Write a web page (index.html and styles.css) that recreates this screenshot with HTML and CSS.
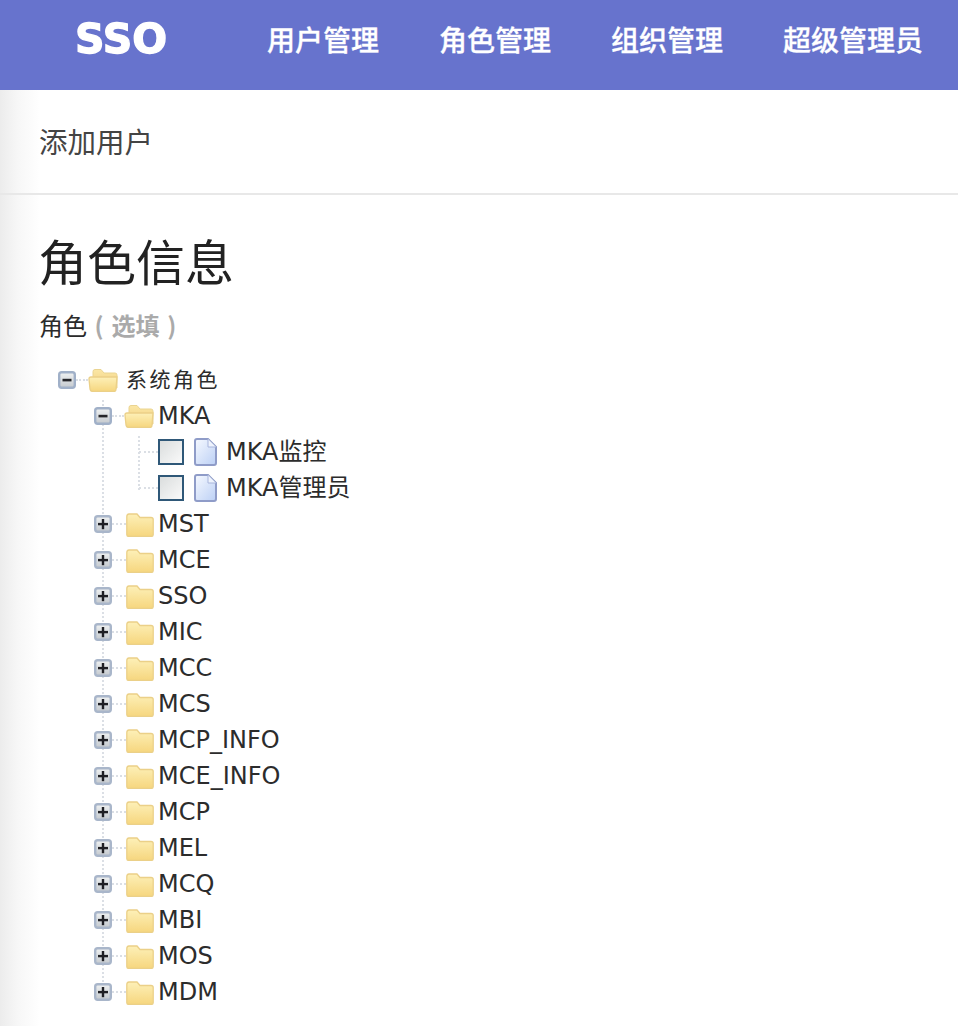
FILE: index.html
```html
<!DOCTYPE html>
<html lang="zh-CN">
<head>
<meta charset="utf-8">
<title>SSO</title>
<link rel="stylesheet" href="styles.css">
</head>
<body>
<svg class="defs" width="0" height="0" aria-hidden="true">
  <defs>
    <linearGradient id="gFolder" x1="0" y1="0" x2="0" y2="1"><stop offset="0" stop-color="#fdf0b8"/><stop offset="1" stop-color="#f6d67e"/></linearGradient>
    <linearGradient id="gBack" x1="0" y1="0" x2="0" y2="1"><stop offset="0" stop-color="#fbe7a6"/><stop offset="1" stop-color="#f2cf7c"/></linearGradient>
    <linearGradient id="gBox" x1="0" y1="0" x2="0" y2="1"><stop offset="0" stop-color="#f0f2f2"/><stop offset="1" stop-color="#c4c9ce"/></linearGradient>
    <linearGradient id="gCheck" x1="0" y1="0" x2="1" y2="1"><stop offset="0" stop-color="#d9dcdc"/><stop offset="1" stop-color="#fbfbfb"/></linearGradient>
    <linearGradient id="gPage" x1="0" y1="0" x2="1" y2="1"><stop offset="0" stop-color="#f6f9ff"/><stop offset="1" stop-color="#bcd0f5"/></linearGradient>
    <symbol id="i-minus" viewBox="0 0 18 18">
      <rect x="1.200" y="1.200" width="15.600" height="15.600" rx="2.500" fill="url(#gBox)" stroke="#a0b0c8" stroke-width="2.400"/>
      <rect x="4.500" y="7.800" width="9" height="2.600" fill="#26262a"/>
    </symbol>
    <symbol id="i-plus" viewBox="0 0 18 18">
      <rect x="1.200" y="1.200" width="15.600" height="15.600" rx="2.500" fill="url(#gBox)" stroke="#a9b6ca" stroke-width="2.400"/>
      <rect x="4" y="7.900" width="10" height="2.400" fill="#1f1f24"/>
      <rect x="7.800" y="4" width="2.400" height="10.200" fill="#1f1f24"/>
    </symbol>
    <symbol id="i-open" viewBox="0 0 30 24">
      <path d="M5 20V3.500Q5 1.500 7 1.500H13L16 5H27Q29 5 29 7V20Z" fill="url(#gBack)" stroke="#ead491"/>
      <path d="M1 11Q1 9 3 9H29L28 21Q28 23.500 26 23.500H5Q2.500 23.500 2 21Z" fill="url(#gFolder)" stroke="#ebd088" stroke-width="1.300"/>
    </symbol>
    <symbol id="i-closed" viewBox="0 0 28 24">
      <path d="M.8 4Q.8 1 3 1H11L14 4.500H25Q27.200 4.500 27.200 6.500V21.500Q27.200 23.500 25 23.500H3Q.8 23.500 .8 21.500Z" fill="url(#gFolder)" stroke="#ebd088" stroke-width="1.300"/>
    </symbol>
    <symbol id="i-check" viewBox="0 0 26 26">
      <rect x="1" y="1" width="24" height="24" fill="url(#gCheck)" stroke="#2f5878" stroke-width="2"/>
    </symbol>
    <symbol id="i-page" viewBox="0 0 24 28">
      <path d="M2 3Q2 1 4 1H15L23 9V25Q23 27 21 27H4Q2 27 2 25Z" fill="url(#gPage)" stroke="#8f9cc8" stroke-width="2"/>
      <path d="M15 1V9H23" fill="#eef3fd" stroke="#a9b6dc"/>
    </symbol>
  </defs>
</svg>

<header class="topbar">
  <div class="logo">SSO</div>
  <nav class="nav">
    <a class="nav-item">用户管理</a>
    <a class="nav-item">角色管理</a>
    <a class="nav-item">组织管理</a>
    <a class="nav-item">超级管理员</a>
  </nav>
</header>

<main class="main">
  <div class="crumb">添加用户</div>
  <section class="content">
    <h1 class="title">角色信息</h1>
    <div class="field-label">角色 <span class="optional">( 选填 )</span></div>
    <ul class="tree">
      <li>
        <div class="row">
          <svg class="toggle"><use href="#i-minus"/></svg><i class="dash"></i>
          <svg class="folder-open"><use href="#i-open"/></svg>
          <span class="label-root">系统角色</span>
        </div>
        <ul class="branch">
          <li>
            <div class="row">
              <svg class="toggle"><use href="#i-minus"/></svg><i class="dash"></i>
              <svg class="folder-open"><use href="#i-open"/></svg>
              <span class="label">MKA</span>
            </div>
            <ul class="leaves">
              <li class="row"><i class="dash-leaf"></i><svg class="check"><use href="#i-check"/></svg><svg class="page"><use href="#i-page"/></svg><span class="label">MKA监控</span></li>
              <li class="row"><i class="dash-leaf"></i><svg class="check"><use href="#i-check"/></svg><svg class="page"><use href="#i-page"/></svg><span class="label">MKA管理员</span></li>
            </ul>
          </li>
          <li class="row"><svg class="toggle"><use href="#i-plus"/></svg><i class="dash-closed"></i><svg class="folder"><use href="#i-closed"/></svg><span class="label">MST</span></li>
          <li class="row"><svg class="toggle"><use href="#i-plus"/></svg><i class="dash-closed"></i><svg class="folder"><use href="#i-closed"/></svg><span class="label">MCE</span></li>
          <li class="row"><svg class="toggle"><use href="#i-plus"/></svg><i class="dash-closed"></i><svg class="folder"><use href="#i-closed"/></svg><span class="label">SSO</span></li>
          <li class="row"><svg class="toggle"><use href="#i-plus"/></svg><i class="dash-closed"></i><svg class="folder"><use href="#i-closed"/></svg><span class="label">MIC</span></li>
          <li class="row"><svg class="toggle"><use href="#i-plus"/></svg><i class="dash-closed"></i><svg class="folder"><use href="#i-closed"/></svg><span class="label">MCC</span></li>
          <li class="row"><svg class="toggle"><use href="#i-plus"/></svg><i class="dash-closed"></i><svg class="folder"><use href="#i-closed"/></svg><span class="label">MCS</span></li>
          <li class="row"><svg class="toggle"><use href="#i-plus"/></svg><i class="dash-closed"></i><svg class="folder"><use href="#i-closed"/></svg><span class="label">MCP_INFO</span></li>
          <li class="row"><svg class="toggle"><use href="#i-plus"/></svg><i class="dash-closed"></i><svg class="folder"><use href="#i-closed"/></svg><span class="label">MCE_INFO</span></li>
          <li class="row"><svg class="toggle"><use href="#i-plus"/></svg><i class="dash-closed"></i><svg class="folder"><use href="#i-closed"/></svg><span class="label">MCP</span></li>
          <li class="row"><svg class="toggle"><use href="#i-plus"/></svg><i class="dash-closed"></i><svg class="folder"><use href="#i-closed"/></svg><span class="label">MEL</span></li>
          <li class="row"><svg class="toggle"><use href="#i-plus"/></svg><i class="dash-closed"></i><svg class="folder"><use href="#i-closed"/></svg><span class="label">MCQ</span></li>
          <li class="row"><svg class="toggle"><use href="#i-plus"/></svg><i class="dash-closed"></i><svg class="folder"><use href="#i-closed"/></svg><span class="label">MBI</span></li>
          <li class="row"><svg class="toggle"><use href="#i-plus"/></svg><i class="dash-closed"></i><svg class="folder"><use href="#i-closed"/></svg><span class="label">MOS</span></li>
          <li class="row"><svg class="toggle"><use href="#i-plus"/></svg><i class="dash-closed"></i><svg class="folder"><use href="#i-closed"/></svg><span class="label">MDM</span></li>
        </ul>
      </li>
    </ul>
  </section>
</main>
</body>
</html>
```

FILE: styles.css
```css
* { box-sizing: border-box; }

html, body {
  margin: 0;
  padding: 0;
  height: 1026px;
  overflow: hidden;
  background: #fff;
  font-family: "Noto Sans CJK SC", "Liberation Sans", sans-serif;
  color: #2b2b2b;
}

.defs { display: block; width: 0; height: 0; }

.topbar {
  display: flex;
  align-items: center;
  height: 90px;
  padding-bottom: 12px;
  background: #6773cd;
  color: #fff;
}

.logo {
  width: 267px;
  padding-left: 75px;
  font-family: "DejaVu Sans", sans-serif;
  font-weight: 700;
  font-size: 41px;
  line-height: 1;
  letter-spacing: 0;
  -webkit-text-stroke: 1.300px #fff;
  filter: blur(.6px);
}

.nav { display: flex; gap: 60px; }

.nav-item {
  font-size: 28px;
  font-weight: 500;
  line-height: 1;
  white-space: nowrap;
  -webkit-text-stroke: .3px #fff;
}

.main {
  height: 936px;
  background: linear-gradient(to right, #ececec 0, #f7f7f7 18px, #fff 40px);
}

.crumb {
  height: 105px;
  padding: 30px 39px 0;
  border-bottom: 2px solid #e8e8e8;
  font-size: 28.500px;
  line-height: 42px;
  color: #444;
}

.content { padding: 0 38px; }

.title {
  margin: 29px 0 0;
  font-size: 49px;
  font-weight: 400;
  line-height: 72px;
  color: #222;
}

.field-label {
  margin: 11px 0 0 1px;
  font-size: 24px;
  line-height: 36px;
  color: #2b2b2b;
}

.optional {
  margin-left: 2px;
  color: #aaa;
  font-weight: 700;
  word-spacing: 2.500px;
}

.tree, .branch, .leaves { list-style: none; margin: 0; padding: 0; }

.tree { margin-top: 19px; padding-left: 20px; }

.branch { position: relative; padding-left: 36px; }

.branch::before {
  content: "";
  position: absolute;
  left: 44px;
  top: 2px;
  bottom: 24px;
  border-left: 2px dotted #dbdfe5;
}

.leaves { position: relative; padding-left: 45px; }

.leaves::before {
  content: "";
  position: absolute;
  left: 44px;
  top: 2px;
  bottom: 16px;
  border-left: 2px dotted #dbdfe5;
}

.row {
  display: flex;
  align-items: center;
  height: 36px;
  position: relative;
}

.toggle, .folder-open, .folder, .check, .page { filter: blur(.35px); }

.toggle { width: 18px; height: 18px; flex: none; position: relative; }

.dash, .dash-closed, .dash-leaf {
  display: block;
  flex: none;
  border-top: 2px dotted #dbdfe5;
  height: 0;
}

.dash { width: 12px; }
.dash-closed { width: 14px; margin-right: 0; }
.dash-leaf { width: 19px; }

.folder-open { width: 30px; height: 24px; flex: none; }
.folder { width: 28px; height: 24px; flex: none; margin-top: 1px; }
.check { width: 26px; height: 26px; flex: none; }
.page { width: 24px; height: 28px; flex: none; margin-left: 9px; }

.label, .label-root {
  font-family: "DejaVu Sans", "Noto Sans CJK SC", sans-serif;
  color: #2c2c2c;
  white-space: nowrap;
}

.label {
  font-size: 24px;
  line-height: 36px;
  margin-left: 4px;
}

.folder-open + .label { margin-left: 4px; }
.page + .label { margin-left: 9px; }

.label-root {
  font-family: "Noto Sans CJK SC", sans-serif;
  font-size: 21px;
  letter-spacing: 2.500px;
  margin-left: 8px;
  padding-bottom: 4px;
}
```
